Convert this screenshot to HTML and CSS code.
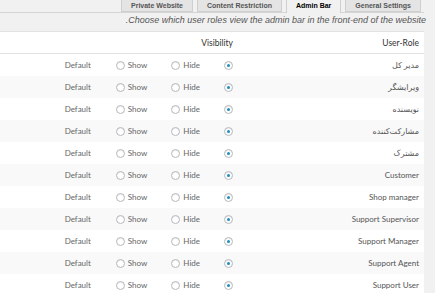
FILE: index.html
```html
<!DOCTYPE html>
<html lang="fa" dir="rtl">
<head>
<meta charset="utf-8">
<title>Admin Bar</title>
<link rel="stylesheet" href="styles.css">
</head>
<body>
<div class="wrap">
  <nav class="tabs">
    <a class="tab">General Settings</a>
    <a class="tab active">Admin Bar</a>
    <a class="tab">Content Restriction</a>
    <a class="tab">Private Website</a>
  </nav>
  <p class="desc">Choose which user roles view the admin bar in the front-end of the website.</p>
  <table class="roles">
    <thead>
      <tr><th class="role">User-Role</th><th class="vis">Visibility</th></tr>
    </thead>
    <tbody>
      <tr><td class="role">مدیر کل</td><td class="vis"><div class="opts"><span class="def">Default</span><label class="opt"><input type="radio" name="r1">Show</label><label class="opt"><input type="radio" name="r1">Hide</label><input type="radio" name="r1" checked></div></td></tr>
      <tr><td class="role">ویرایشگر</td><td class="vis"><div class="opts"><span class="def">Default</span><label class="opt"><input type="radio" name="r2">Show</label><label class="opt"><input type="radio" name="r2">Hide</label><input type="radio" name="r2" checked></div></td></tr>
      <tr><td class="role">نویسنده</td><td class="vis"><div class="opts"><span class="def">Default</span><label class="opt"><input type="radio" name="r3">Show</label><label class="opt"><input type="radio" name="r3">Hide</label><input type="radio" name="r3" checked></div></td></tr>
      <tr><td class="role">مشارکت‌کننده</td><td class="vis"><div class="opts"><span class="def">Default</span><label class="opt"><input type="radio" name="r4">Show</label><label class="opt"><input type="radio" name="r4">Hide</label><input type="radio" name="r4" checked></div></td></tr>
      <tr><td class="role">مشترک</td><td class="vis"><div class="opts"><span class="def">Default</span><label class="opt"><input type="radio" name="r5">Show</label><label class="opt"><input type="radio" name="r5">Hide</label><input type="radio" name="r5" checked></div></td></tr>
      <tr><td class="role">Customer</td><td class="vis"><div class="opts"><span class="def">Default</span><label class="opt"><input type="radio" name="r6">Show</label><label class="opt"><input type="radio" name="r6">Hide</label><input type="radio" name="r6" checked></div></td></tr>
      <tr><td class="role">Shop manager</td><td class="vis"><div class="opts"><span class="def">Default</span><label class="opt"><input type="radio" name="r7">Show</label><label class="opt"><input type="radio" name="r7">Hide</label><input type="radio" name="r7" checked></div></td></tr>
      <tr><td class="role">Support Supervisor</td><td class="vis"><div class="opts"><span class="def">Default</span><label class="opt"><input type="radio" name="r8">Show</label><label class="opt"><input type="radio" name="r8">Hide</label><input type="radio" name="r8" checked></div></td></tr>
      <tr><td class="role">Support Manager</td><td class="vis"><div class="opts"><span class="def">Default</span><label class="opt"><input type="radio" name="r9">Show</label><label class="opt"><input type="radio" name="r9">Hide</label><input type="radio" name="r9" checked></div></td></tr>
      <tr><td class="role">Support Agent</td><td class="vis"><div class="opts"><span class="def">Default</span><label class="opt"><input type="radio" name="r10">Show</label><label class="opt"><input type="radio" name="r10">Hide</label><input type="radio" name="r10" checked></div></td></tr>
      <tr><td class="role">Support User</td><td class="vis"><div class="opts"><span class="def">Default</span><label class="opt"><input type="radio" name="r11">Show</label><label class="opt"><input type="radio" name="r11">Hide</label><input type="radio" name="r11" checked></div></td></tr>
    </tbody>
  </table>
</div>
</body>
</html>
```
FILE: styles.css
```css
html, body {
  margin: 0;
  padding: 0;
  background: #f1f1f1;
}
body {
  font-family: Lato, "DejaVu Sans", sans-serif;
  color: #555;
  overflow: hidden;
}
.wrap {
  margin: 0 11px 0 0;
}
.tabs {
  display: flex;
  gap: 4px;
  height: 12px;
  padding-right: 3px;
  border-bottom: 1px solid #d5d5d5;
}
.tab {
  display: block;
  height: 12px;
  box-sizing: border-box;
  padding: 0 9px;
  background: #e4e4e4;
  border: 1px solid #cfcfcf;
  border-top: none;
  font-family: "Liberation Sans", Arial, sans-serif;
  font-weight: bold;
  font-size: 7px;
  line-height: 11px;
  color: #555;
  white-space: nowrap;
}
.tab.active {
  background: #f1f1f1;
  color: #000;
  height: 13px;
  border-bottom: none;
}
.desc {
  margin: 0 -2px 4px 0;
  height: 14px;
  line-height: 14px;
  font-family: "Liberation Sans", Arial, sans-serif;
  font-style: italic;
  font-size: 9px;
  color: #555;
  white-space: nowrap;
}
.roles {
  width: 100%;
  border-collapse: collapse;
  background: #fff;
  border-top: 1px solid #e2e2e2;
  table-layout: fixed;
}
.roles th {
  height: 21px;
  padding: 0 5px;
  font-weight: normal;
  font-size: 8.5px;
  color: #333;
  text-align: right;
  border-bottom: 1px solid #e2e2e2;
}
.roles td {
  height: 22px;
  padding: 0 5px;
  font-size: 8px;
  text-align: right;
}
.roles .role {
  width: 176px;
}
.roles td.role {
  color: #555;
}
.roles tbody tr:nth-child(even) td {
  background: #f9f9f9;
}
.opts {
  direction: ltr;
  display: flex;
  justify-content: flex-end;
  align-items: center;
  color: #666;
}
.def {
  margin-right: 25px;
}
.opt {
  display: flex;
  align-items: center;
  gap: 3px;
  margin-right: 24px;
}
.opts input {
  appearance: none;
  -webkit-appearance: none;
  box-sizing: border-box;
  width: 9px;
  height: 9px;
  margin: 0;
  border: 1px solid #b4b9be;
  border-radius: 50%;
  background: #fff;
  box-shadow: inset 0 1px 1px rgba(0,0,0,0.08);
  display: flex;
  align-items: center;
  justify-content: center;
}
.opts input:checked::before {
  content: "";
  width: 3px;
  height: 3px;
  border-radius: 50%;
  background: #1e8cbe;
}
```
